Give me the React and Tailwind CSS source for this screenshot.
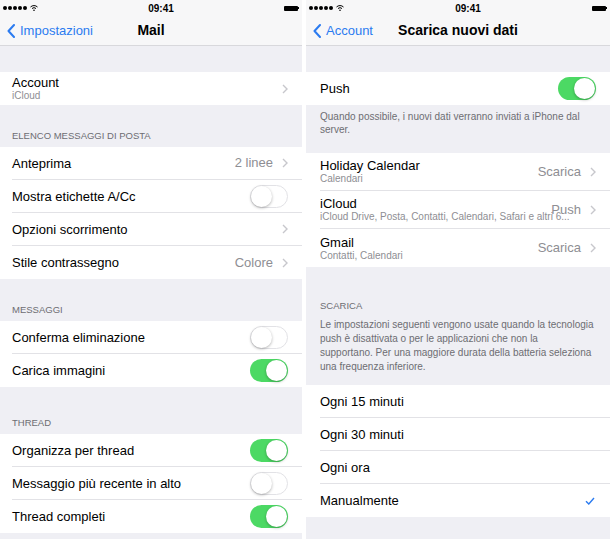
import React from 'react';

const font = { fontFamily: '"Liberation Sans", Arial, sans-serif' };

function Chevron() {
    return (
        <svg width="6" height="10" viewBox="0 0 6 10" className="shrink-0">
            <path d="M1 1 L5 5 L1 9" fill="none" stroke="#c7c7cc" strokeWidth="1.4" />
        </svg>
    );
}

function Toggle({ on }) {
    return (
        <div
            className={`w-[38px] h-[23px] rounded-full flex shrink-0 ${on ? 'bg-[#4cd964] justify-end p-[1px]' : 'bg-white border border-[#e2e2e6] justify-start'}`}
        >
            <div className="w-[21px] h-[21px] rounded-full bg-white shadow-[0_1px_3px_rgba(0,0,0,0.3)]" />
        </div>
    );
}

function StatusBar() {
    return (
        <div className="h-[16px] flex items-center justify-between px-[3px]">
            <div className="flex items-center gap-[1px]">
                {[0, 1, 2, 3, 4].map((i) => (
                    <div key={i} className="w-[4px] h-[4px] rounded-full bg-black" />
                ))}
                <svg width="8" height="6" viewBox="0 0 8 6" className="ml-[2px]">
                    <path d="M0.5 2 A5 5 0 0 1 7.5 2" fill="none" stroke="#000" strokeWidth="1" />
                    <path d="M2 3.5 A3 3 0 0 1 6 3.5" fill="none" stroke="#000" strokeWidth="1" />
                    <circle cx="4" cy="5.2" r="0.8" fill="#000" />
                </svg>
            </div>
            <div className="text-[10px] font-bold text-black">09:41</div>
            <div className="flex items-center">
                <div className="w-[14px] h-[5px] bg-black rounded-[1px]" />
                <div className="w-[1px] h-[2px] bg-black" />
            </div>
        </div>
    );
}

function NavBar({ back, title }) {
    return (
        <div className="h-[30px] flex items-center border-b border-[#d8d8dc]">
            <div className="flex items-center pl-[7px] gap-[5px] text-[#2b7bf0] text-[13px] w-[100px]">
                <svg width="8" height="14" viewBox="0 0 8 14">
                    <path d="M7 1 L1.5 7 L7 13" fill="none" stroke="#2b7bf0" strokeWidth="2" strokeLinecap="round" strokeLinejoin="round" />
                </svg>
                {back}
            </div>
            <div className="flex-1 text-center text-[14px] font-semibold text-black -ml-[100px]">{title}</div>
        </div>
    );
}

function Row({ label, sub, value, toggle, chevron, check, last, h = 'h-[33px]', pl = 'pl-3' }) {
    return (
        <div className={`${h} ${pl} bg-white flex`}>
            <div className={`flex-1 flex items-center pr-[14px] min-w-0 ${last ? '' : 'border-b border-[#e2e2e6]'}`}>
                <div className="flex-1 min-w-0">
                    <div className="text-[13px] text-black leading-[15px]">{label}</div>
                    {sub && <div className="text-[10px] text-[#8e8e93] leading-[12px] whitespace-nowrap">{sub}</div>}
                </div>
                {value && <div className="text-[13px] text-[#8e8e93] mr-[9px] shrink-0">{value}</div>}
                {chevron && <Chevron />}
                {toggle !== undefined && <Toggle on={toggle} />}
                {check && (
                    <svg width="10" height="8" viewBox="0 0 10 8" className="mr-[1px]">
                        <path d="M1 4.2 L3.8 7 L9 1" fill="none" stroke="#2b7bf0" strokeWidth="1.4" />
                    </svg>
                )}
            </div>
        </div>
    );
}

function Header({ children, pt = 'pt-[25px]' }) {
    return <div className={`${pt} pb-[6px] pl-3 text-[9.5px] text-[#6d6d72] uppercase leading-[11px]`}>{children}</div>;
}

function MailPanel() {
    return (
        <div className="w-[302px] bg-[#efeff4] h-full flex flex-col">
            <div className="bg-[#f7f7f8]">
                <StatusBar />
                <NavBar back="Impostazioni" title="Mail" />
            </div>
            <div className="h-[26px]" />
            <Row label="Account" sub="iCloud" chevron last />
            <Header>Elenco messaggi di posta</Header>
            <Row label="Anteprima" value="2 linee" chevron />
            <Row label="Mostra etichette A/Cc" toggle={false} />
            <Row label="Opzioni scorrimento" chevron />
            <Row label="Stile contrassegno" value="Colore" chevron last />
            <Header>Messaggi</Header>
            <Row label="Conferma eliminazione" toggle={false} />
            <Row label="Carica immagini" toggle={true} last />
            <Header pt="pt-[30px]">Thread</Header>
            <Row label="Organizza per thread" toggle={true} />
            <Row label="Messaggio più recente in alto" toggle={false} />
            <Row label="Thread completi" toggle={true} last />
        </div>
    );
}

function FetchPanel() {
    const pl = 'pl-[14px]';
    return (
        <div className="w-[304px] bg-[#efeff4] h-full flex flex-col">
            <div className="bg-[#f7f7f8]">
                <StatusBar />
                <NavBar back="Account" title="Scarica nuovi dati" />
            </div>
            <div className="h-[26px]" />
            <Row label="Push" toggle={true} last pl={pl} />
            <div className="h-[48px] pl-[14px] pr-3 pt-[5px] text-[10px] leading-[13px] text-[#6d6d72]">
                Quando possibile, i nuovi dati verranno inviati a iPhone dal<br />server.
            </div>
            <Row label="Holiday Calendar" sub="Calendari" value="Scarica" chevron h="h-[38px]" pl={pl} />
            <Row label="iCloud" sub="iCloud Drive, Posta, Contatti, Calendari, Safari e altri 6..." value="Push" chevron h="h-[38px]" pl={pl} />
            <Row label="Gmail" sub="Contatti, Calendari" value="Scarica" chevron h="h-[38px]" last pl={pl} />
            <div className="pt-[33px] pl-[14px] text-[9.5px] text-[#6d6d72] leading-[11px]">SCARICA</div>
            <div className="pl-[14px] pt-[7px] pb-[11px] text-[10px] leading-[14px] text-[#6d6d72] whitespace-nowrap">
                Le impostazioni seguenti vengono usate quando la tecnologia<br />
                push è disattivata o per le applicazioni che non la<br />
                supportano. Per una maggiore durata della batteria seleziona<br />
                una frequenza inferiore.
            </div>
            <Row label="Ogni 15 minuti" pl={pl} />
            <Row label="Ogni 30 minuti" pl={pl} />
            <Row label="Ogni ora" pl={pl} />
            <Row label="Manualmente" check last pl={pl} />
        </div>
    );
}

export default function App() {
    return (
        <div className="w-[610px] h-[539px] bg-white flex gap-[4px] overflow-hidden" style={font}>
            <MailPanel />
            <FetchPanel />
        </div>
    );
}
